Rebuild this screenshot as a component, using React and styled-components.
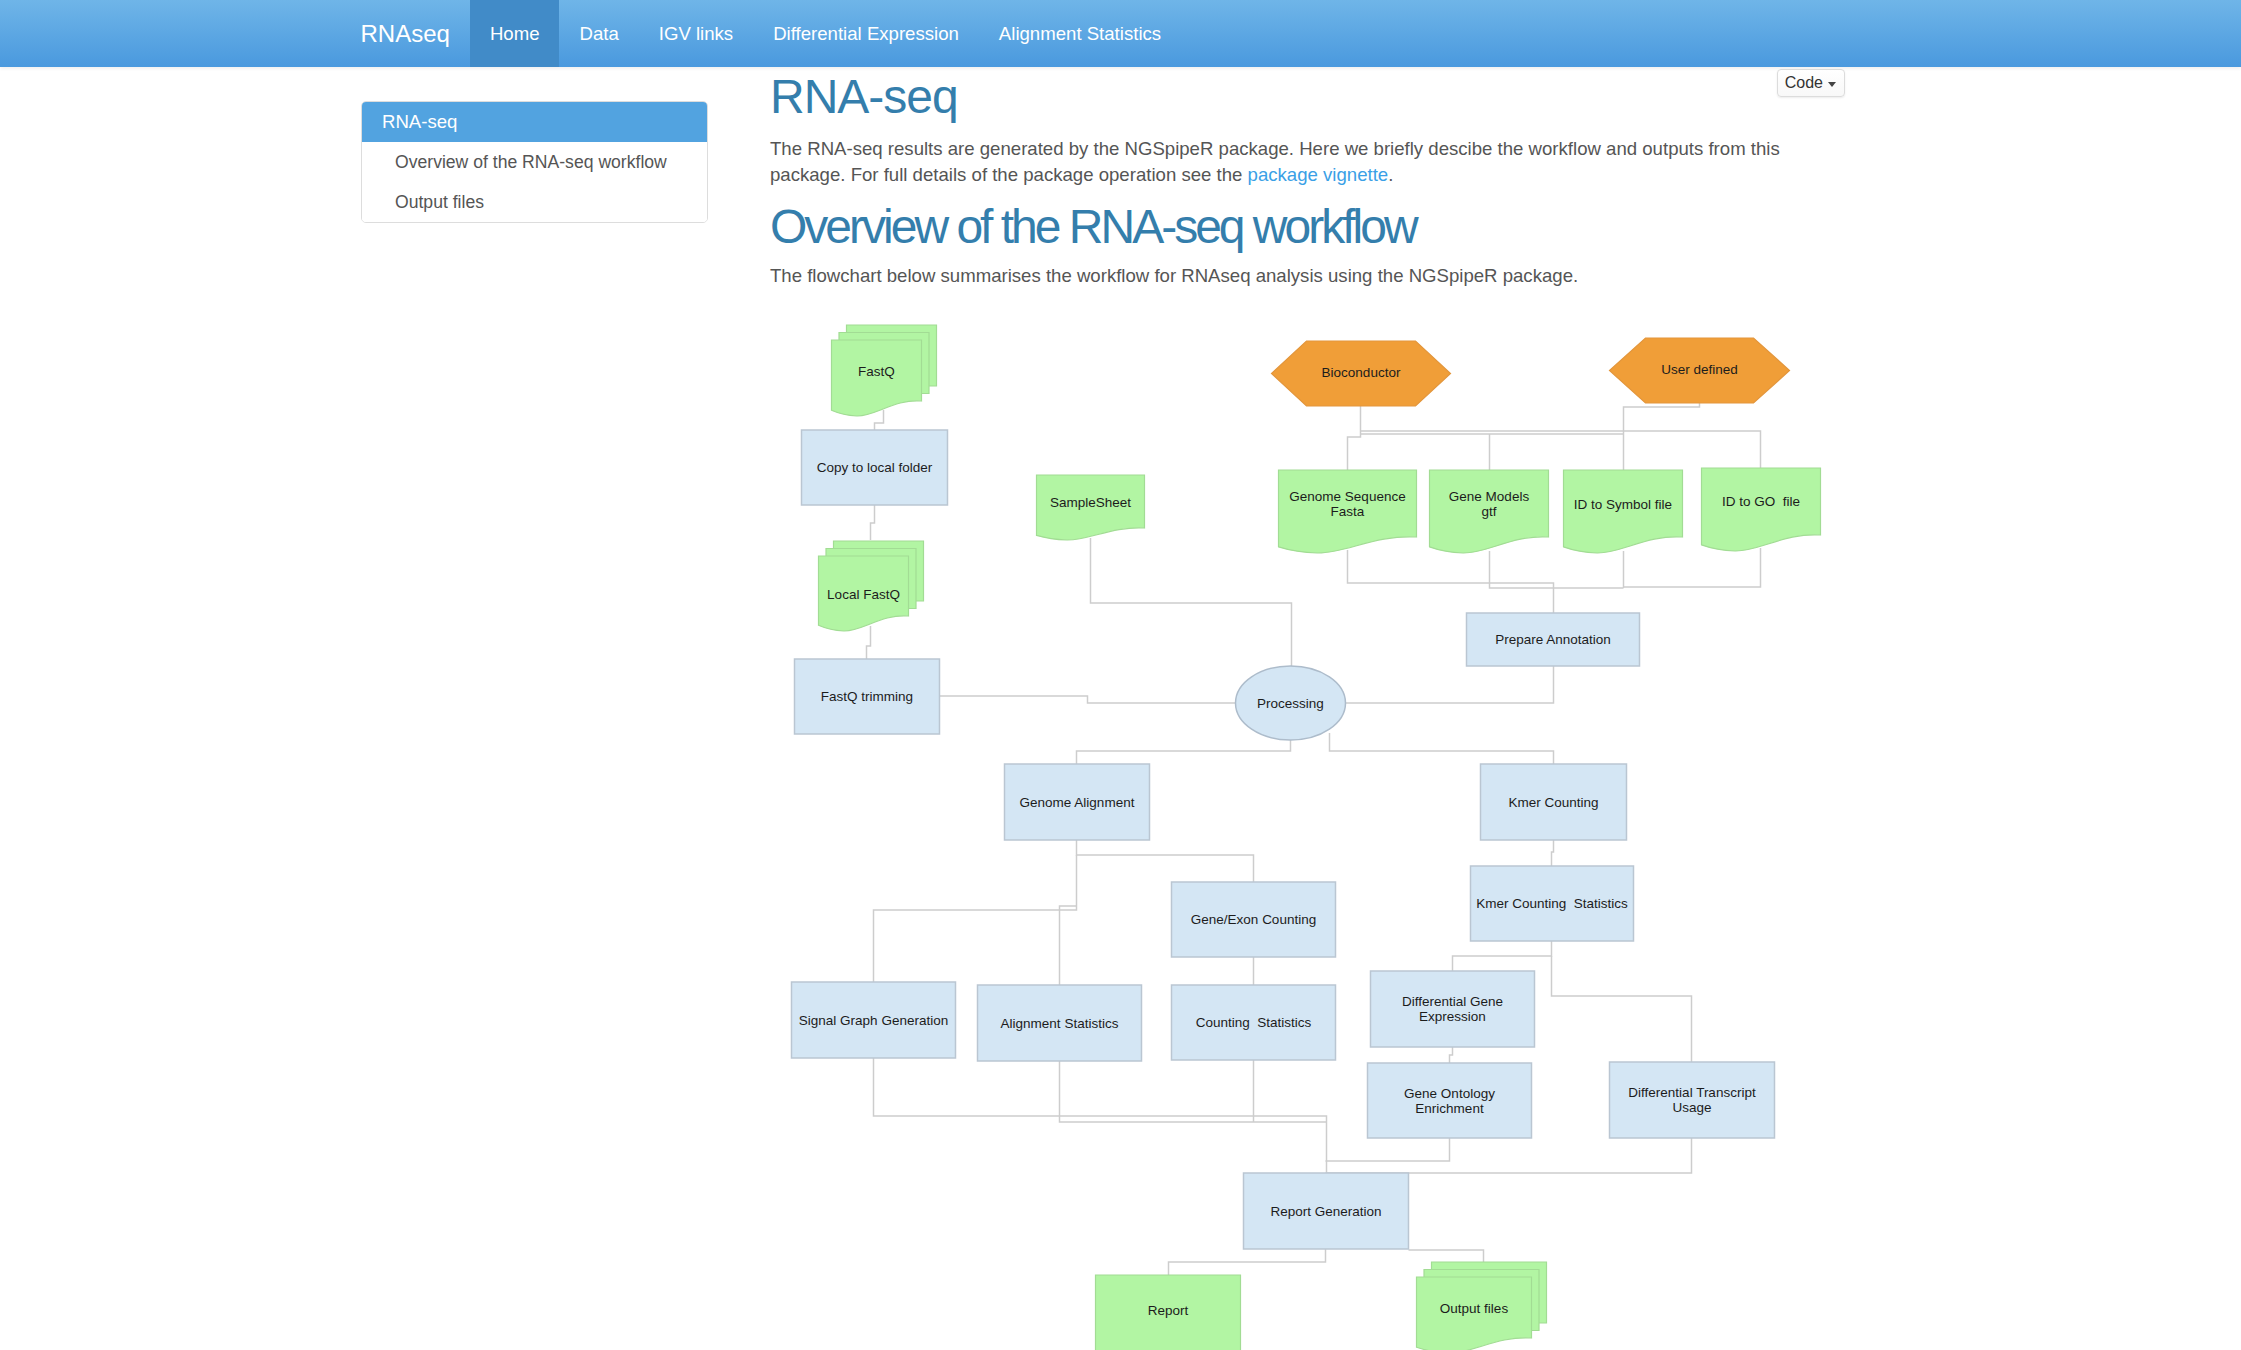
import React from 'react';
import styled, { createGlobalStyle } from 'styled-components';

const GlobalStyle = createGlobalStyle`
  html, body {
    margin: 0;
    padding: 0;
    background: #ffffff;
  }
  body {
    font-family: "Liberation Sans", Arial, sans-serif;
    color: #555555;
  }
`;

const navLinks = [
  { label: 'Home', active: true },
  { label: 'Data' },
  { label: 'IGV links' },
  { label: 'Differential Expression' },
  { label: 'Alignment Statistics' },
];

const tocItems = [
  { label: 'RNA-seq', active: true },
  { label: 'Overview of the RNA-seq workflow', sub: true },
  { label: 'Output files', sub: true },
];

// flowchart data, in page pixels (the svg origin is shifted back below)
const ORIGIN = { x: 770.5, y: 304 };

const boxes = [
  { x: 802, y: 432, w: 146, h: 75, lines: ['Copy to local folder'] },
  { x: 795, y: 661, w: 145, h: 75, lines: ['FastQ trimming'] },
  { x: 1467, y: 615, w: 173, h: 53, lines: ['Prepare Annotation'] },
  { x: 1005, y: 766, w: 145, h: 76, lines: ['Genome Alignment'] },
  { x: 1481, y: 766, w: 146, h: 76, lines: ['Kmer Counting'] },
  { x: 1172, y: 884, w: 164, h: 75, lines: ['Gene/Exon Counting'] },
  { x: 1471, y: 868, w: 163, h: 75, lines: ['Kmer Counting  Statistics'] },
  { x: 792, y: 984, w: 164, h: 76, lines: ['Signal Graph Generation'] },
  { x: 978, y: 987, w: 164, h: 76, lines: ['Alignment Statistics'] },
  { x: 1172, y: 987, w: 164, h: 75, lines: ['Counting  Statistics'] },
  { x: 1371, y: 973, w: 164, h: 76, lines: ['Differential Gene', 'Expression'] },
  { x: 1368, y: 1065, w: 164, h: 75, lines: ['Gene Ontology', 'Enrichment'] },
  { x: 1610, y: 1064, w: 165, h: 76, lines: ['Differential Transcript', 'Usage'] },
  { x: 1244, y: 1175, w: 165, h: 76, lines: ['Report Generation'] },
];

const docs = [
  { x: 1037, y: 477, w: 108, h: 53, d: 12, ty: 504, lines: ['SampleSheet'] },
  { x: 1279, y: 472, w: 138, h: 67, d: 16, ty: 506, lines: ['Genome Sequence', 'Fasta'] },
  { x: 1430, y: 472, w: 119, h: 67, d: 16, ty: 506, lines: ['Gene Models', 'gtf'] },
  { x: 1564, y: 472, w: 119, h: 67, d: 16, ty: 506, lines: ['ID to Symbol file'] },
  { x: 1702, y: 470, w: 119, h: 67, d: 16, ty: 503, lines: ['ID to GO  file'] },
  { x: 1096, y: 1277, w: 145, h: 90, d: 16, ty: 1312, lines: ['Report'] },
];

const stacks = [
  { x: 832, y: 342, w: 90, h: 61, d: 15, ty: 373, lines: ['FastQ'] },
  { x: 819, y: 558, w: 90, h: 60, d: 15, ty: 596, lines: ['Local FastQ'] },
  { x: 1417, y: 1279, w: 115, h: 61, d: 15, ty: 1310, lines: ['Output files'] },
];

const hexes = [
  { x: 1272, y: 343, w: 179, h: 65, inset: 35, lines: ['Bioconductor'] },
  { x: 1610, y: 340, w: 180, h: 65, inset: 36, lines: ['User defined'] },
];

const wires = [
  [[884, 412], [884, 425], [875, 425], [875, 432]],
  [[875, 507], [875, 525], [871, 525], [871, 542]],
  [[871, 628], [871, 648], [867, 648], [867, 661]],
  [[940, 698], [1088, 698], [1088, 705], [1236, 705]],
  [[1091, 540], [1091, 605], [1292, 605], [1292, 668]],
  [[1361, 408], [1361, 439], [1348, 439], [1348, 472]],
  [[1361, 433], [1624, 433]],
  [[1361, 436], [1624, 436]],
  [[1490, 436], [1490, 472]],
  [[1700, 405], [1700, 409], [1624, 409], [1624, 472]],
  [[1624, 433], [1761, 433], [1761, 470]],
  [[1348, 552], [1348, 585], [1554, 585], [1554, 615]],
  [[1490, 553], [1490, 590], [1624, 590]],
  [[1624, 553], [1624, 590]],
  [[1761, 550], [1761, 589], [1624, 589]],
  [[1554, 668], [1554, 705], [1346, 705]],
  [[1291, 742], [1291, 753], [1077, 753], [1077, 766]],
  [[1330, 735], [1330, 753], [1554, 753], [1554, 766]],
  [[1077, 842], [1077, 857], [1254, 857], [1254, 884]],
  [[1077, 857], [1077, 912], [874, 912], [874, 984]],
  [[1077, 908], [1060, 908], [1060, 987]],
  [[1254, 959], [1254, 987]],
  [[1554, 842], [1554, 854], [1552, 854], [1552, 868]],
  [[1552, 943], [1552, 958], [1453, 958], [1453, 973]],
  [[1552, 958], [1552, 998], [1692, 998], [1692, 1064]],
  [[1453, 1049], [1453, 1057], [1450, 1057], [1450, 1065]],
  [[874, 1060], [874, 1118], [1327, 1118], [1327, 1175]],
  [[1060, 1063], [1060, 1124], [1327, 1124]],
  [[1254, 1062], [1254, 1124]],
  [[1450, 1140], [1450, 1163], [1326, 1163]],
  [[1692, 1140], [1692, 1175], [1326, 1175]],
  [[1326, 1251], [1326, 1264], [1169, 1264], [1169, 1277]],
  [[1409, 1252], [1484, 1252], [1484, 1264]],
];

const Navbar = styled.nav`
  height: 67px;
  background-image: linear-gradient(#6fb5e8, #4a99de);
  box-shadow: 0 2px 3px rgba(0, 0, 0, 0.06);
`;

const NavInner = styled.div`
  width: 1560px;
  margin: 0 auto;
  display: flex;
  align-items: stretch;
  height: 100%;
`;

const Brand = styled.a`
  padding: 0 20px;
  line-height: 67px;
  font-size: 24px;
  color: #ffffff;
`;

const NavLink = styled.a`
  padding: 0 20px;
  line-height: 67px;
  font-size: 18.6px;
  color: #ffffff;
  background: ${(p) => (p.$active ? '#418bc8' : 'transparent')};
`;

const Body = styled.div`
  display: flex;
  align-items: flex-start;
  gap: 62px;
  padding: 2px 0 0 361px;
`;

const Toc = styled.ul`
  list-style: none;
  margin: 32px 0 0;
  padding: 0;
  width: 345px;
  border: 1px solid #dddddd;
  border-radius: 5px;
  overflow: hidden;
  flex-shrink: 0;
`;

const TocItem = styled.li`
  height: 40px;
  line-height: 40px;
  padding-left: ${(p) => (p.$sub ? '33px' : '20px')};
  font-size: ${(p) => (p.$sub ? '17.6px' : '18.6px')};
  color: ${(p) => (p.$active ? '#ffffff' : '#555555')};
  background: ${(p) => (p.$active ? '#52a3e0' : '#ffffff')};
`;

const Main = styled.main`
  width: 1077px;
`;

const CodeButton = styled.button`
  float: right;
  height: 28px;
  padding: 0 8px 0 7px;
  margin: 0 2px 0 0;
  border: 1px solid #dcdcdc;
  border-radius: 4px;
  background: linear-gradient(#ffffff, #f8f8f8);
  box-shadow: 0 1px 2px rgba(0, 0, 0, 0.08);
  font-family: "Liberation Sans", Arial, sans-serif;
  font-size: 16px;
  color: #333333;
  display: flex;
  align-items: center;
  gap: 5px;
`;

const Caret = styled.span`
  width: 0;
  height: 0;
  border-left: 4px solid transparent;
  border-right: 4px solid transparent;
  border-top: 5px solid #444444;
  margin-top: 2px;
`;

const Title = styled.h1`
  margin: ${(p) => (p.$first ? '1px 0 12.5px' : '0 0 10px')};
  font-size: 48px;
  line-height: 53px;
  font-weight: 500;
  color: #347eac;
  letter-spacing: ${(p) => p.$spacing || '0px'};
`;

const Para = styled.p`
  margin: 0 0 11.5px;
  font-size: 18.6px;
  line-height: 26.7px;
  color: #555555;
`;

const Link = styled.a`
  color: #3aa0e6;
  text-decoration: none;
`;

const Chart = styled.svg`
  display: block;
  margin-top: 4px;
  overflow: visible;
`;

const Wire = styled.polyline`
  fill: none;
  stroke: #cdcdcd;
  stroke-width: 1.5;
`;

const Box = styled.rect`
  fill: #d4e6f4;
  stroke: #bac6d2;
  stroke-width: 1.5;
`;

const Sheet = styled.path`
  fill: #b2f5a3;
  stroke: #a2dc94;
  stroke-width: 1.2;
`;

const Hex = styled.polygon`
  fill: #f09e38;
  stroke: #e3963c;
  stroke-width: 1.2;
`;

const Oval = styled.ellipse`
  fill: #d4e6f4;
  stroke: #adbccb;
  stroke-width: 1.5;
`;

const Label = styled.text`
  font-family: "Liberation Sans", Arial, sans-serif;
  font-size: 13.5px;
  fill: #1c1c1c;
  text-anchor: middle;
  white-space: pre;
`;

const docPath = ({ x, y, w, h, d }) => {
  const b = y + h;
  return `M${x},${y} H${x + w} V${b} C${x + w * 0.7},${b - d * 0.15} ${x + w * 0.48},${b + d * 1.05} ${x + w * 0.28},${b + d} C${x + w * 0.14},${b + d * 0.97} ${x + w * 0.06},${b + d * 0.78} ${x},${b + d * 0.62} Z`;
};

const rectPath = ({ x, y, w, h }) => `M${x},${y} H${x + w} V${y + h} H${x} Z`;

const Lines = ({ cx, cy, lines }) => {
  const start = cy - ((lines.length - 1) * 15) / 2;
  return (
    <Label x={cx} y={start}>
      {lines.map((l, i) => (
        <tspan key={i} x={cx} dy={i === 0 ? '0.35em' : 15}>
          {l}
        </tspan>
      ))}
    </Label>
  );
};

const Flowchart = () => (
  <Chart width="1077" height="1080" viewBox="0 0 1077 1080">
    <g transform={`translate(${-ORIGIN.x},${-ORIGIN.y})`}>
      {wires.map((pts, i) => (
        <Wire key={i} points={pts.map((p) => p.join(',')).join(' ')} />
      ))}
      {boxes.map((b, i) => (
        <g key={i}>
          <Box x={b.x} y={b.y} width={b.w} height={b.h} />
          <Lines cx={b.x + b.w / 2} cy={b.y + b.h / 2} lines={b.lines} />
        </g>
      ))}
      {docs.map((s, i) => (
        <g key={i}>
          <Sheet d={docPath(s)} />
          <Lines cx={s.x + s.w / 2} cy={s.ty} lines={s.lines} />
        </g>
      ))}
      {stacks.map((s, i) => (
        <g key={i}>
          <Sheet d={rectPath({ ...s, x: s.x + 15, y: s.y - 15 })} />
          <Sheet d={rectPath({ ...s, x: s.x + 7.5, y: s.y - 7.5 })} />
          <Sheet d={docPath(s)} />
          <Lines cx={s.x + s.w / 2} cy={s.ty} lines={s.lines} />
        </g>
      ))}
      {hexes.map((h, i) => {
        const my = h.y + h.h / 2;
        const pts = [
          [h.x + h.inset, h.y],
          [h.x + h.w - h.inset, h.y],
          [h.x + h.w, my],
          [h.x + h.w - h.inset, h.y + h.h],
          [h.x + h.inset, h.y + h.h],
          [h.x, my],
        ];
        return (
          <g key={i}>
            <Hex points={pts.map((p) => p.join(',')).join(' ')} />
            <Lines cx={h.x + h.w / 2} cy={my - 1} lines={h.lines} />
          </g>
        );
      })}
      <Oval cx="1291" cy="705" rx="55" ry="37" />
      <Lines cx={1291} cy={705} lines={['Processing']} />
    </g>
  </Chart>
);

const App = () => {
  return (
    <>
      <GlobalStyle />
      <Navbar>
        <NavInner>
          <Brand>RNAseq</Brand>
          {navLinks.map((n) => (
            <NavLink key={n.label} $active={n.active}>
              {n.label}
            </NavLink>
          ))}
        </NavInner>
      </Navbar>
      <Body>
        <Toc>
          {tocItems.map((t) => (
            <TocItem key={t.label} $active={t.active} $sub={t.sub}>
              {t.label}
            </TocItem>
          ))}
        </Toc>
        <Main>
          <CodeButton>
            Code <Caret />
          </CodeButton>
          <Title $first $spacing="-1px">RNA-seq</Title>
          <Para>
            The RNA-seq results are generated by the NGSpipeR package. Here we briefly descibe the workflow and
            outputs from this package. For full details of the package operation see the{' '}
            <Link>package vignette</Link>.
          </Para>
          <Title $spacing="-3px">Overview of the RNA-seq workflow</Title>
          <Para>The flowchart below summarises the workflow for RNAseq analysis using the NGSpipeR package.</Para>
          <Flowchart />
        </Main>
      </Body>
    </>
  );
};

export default App;
